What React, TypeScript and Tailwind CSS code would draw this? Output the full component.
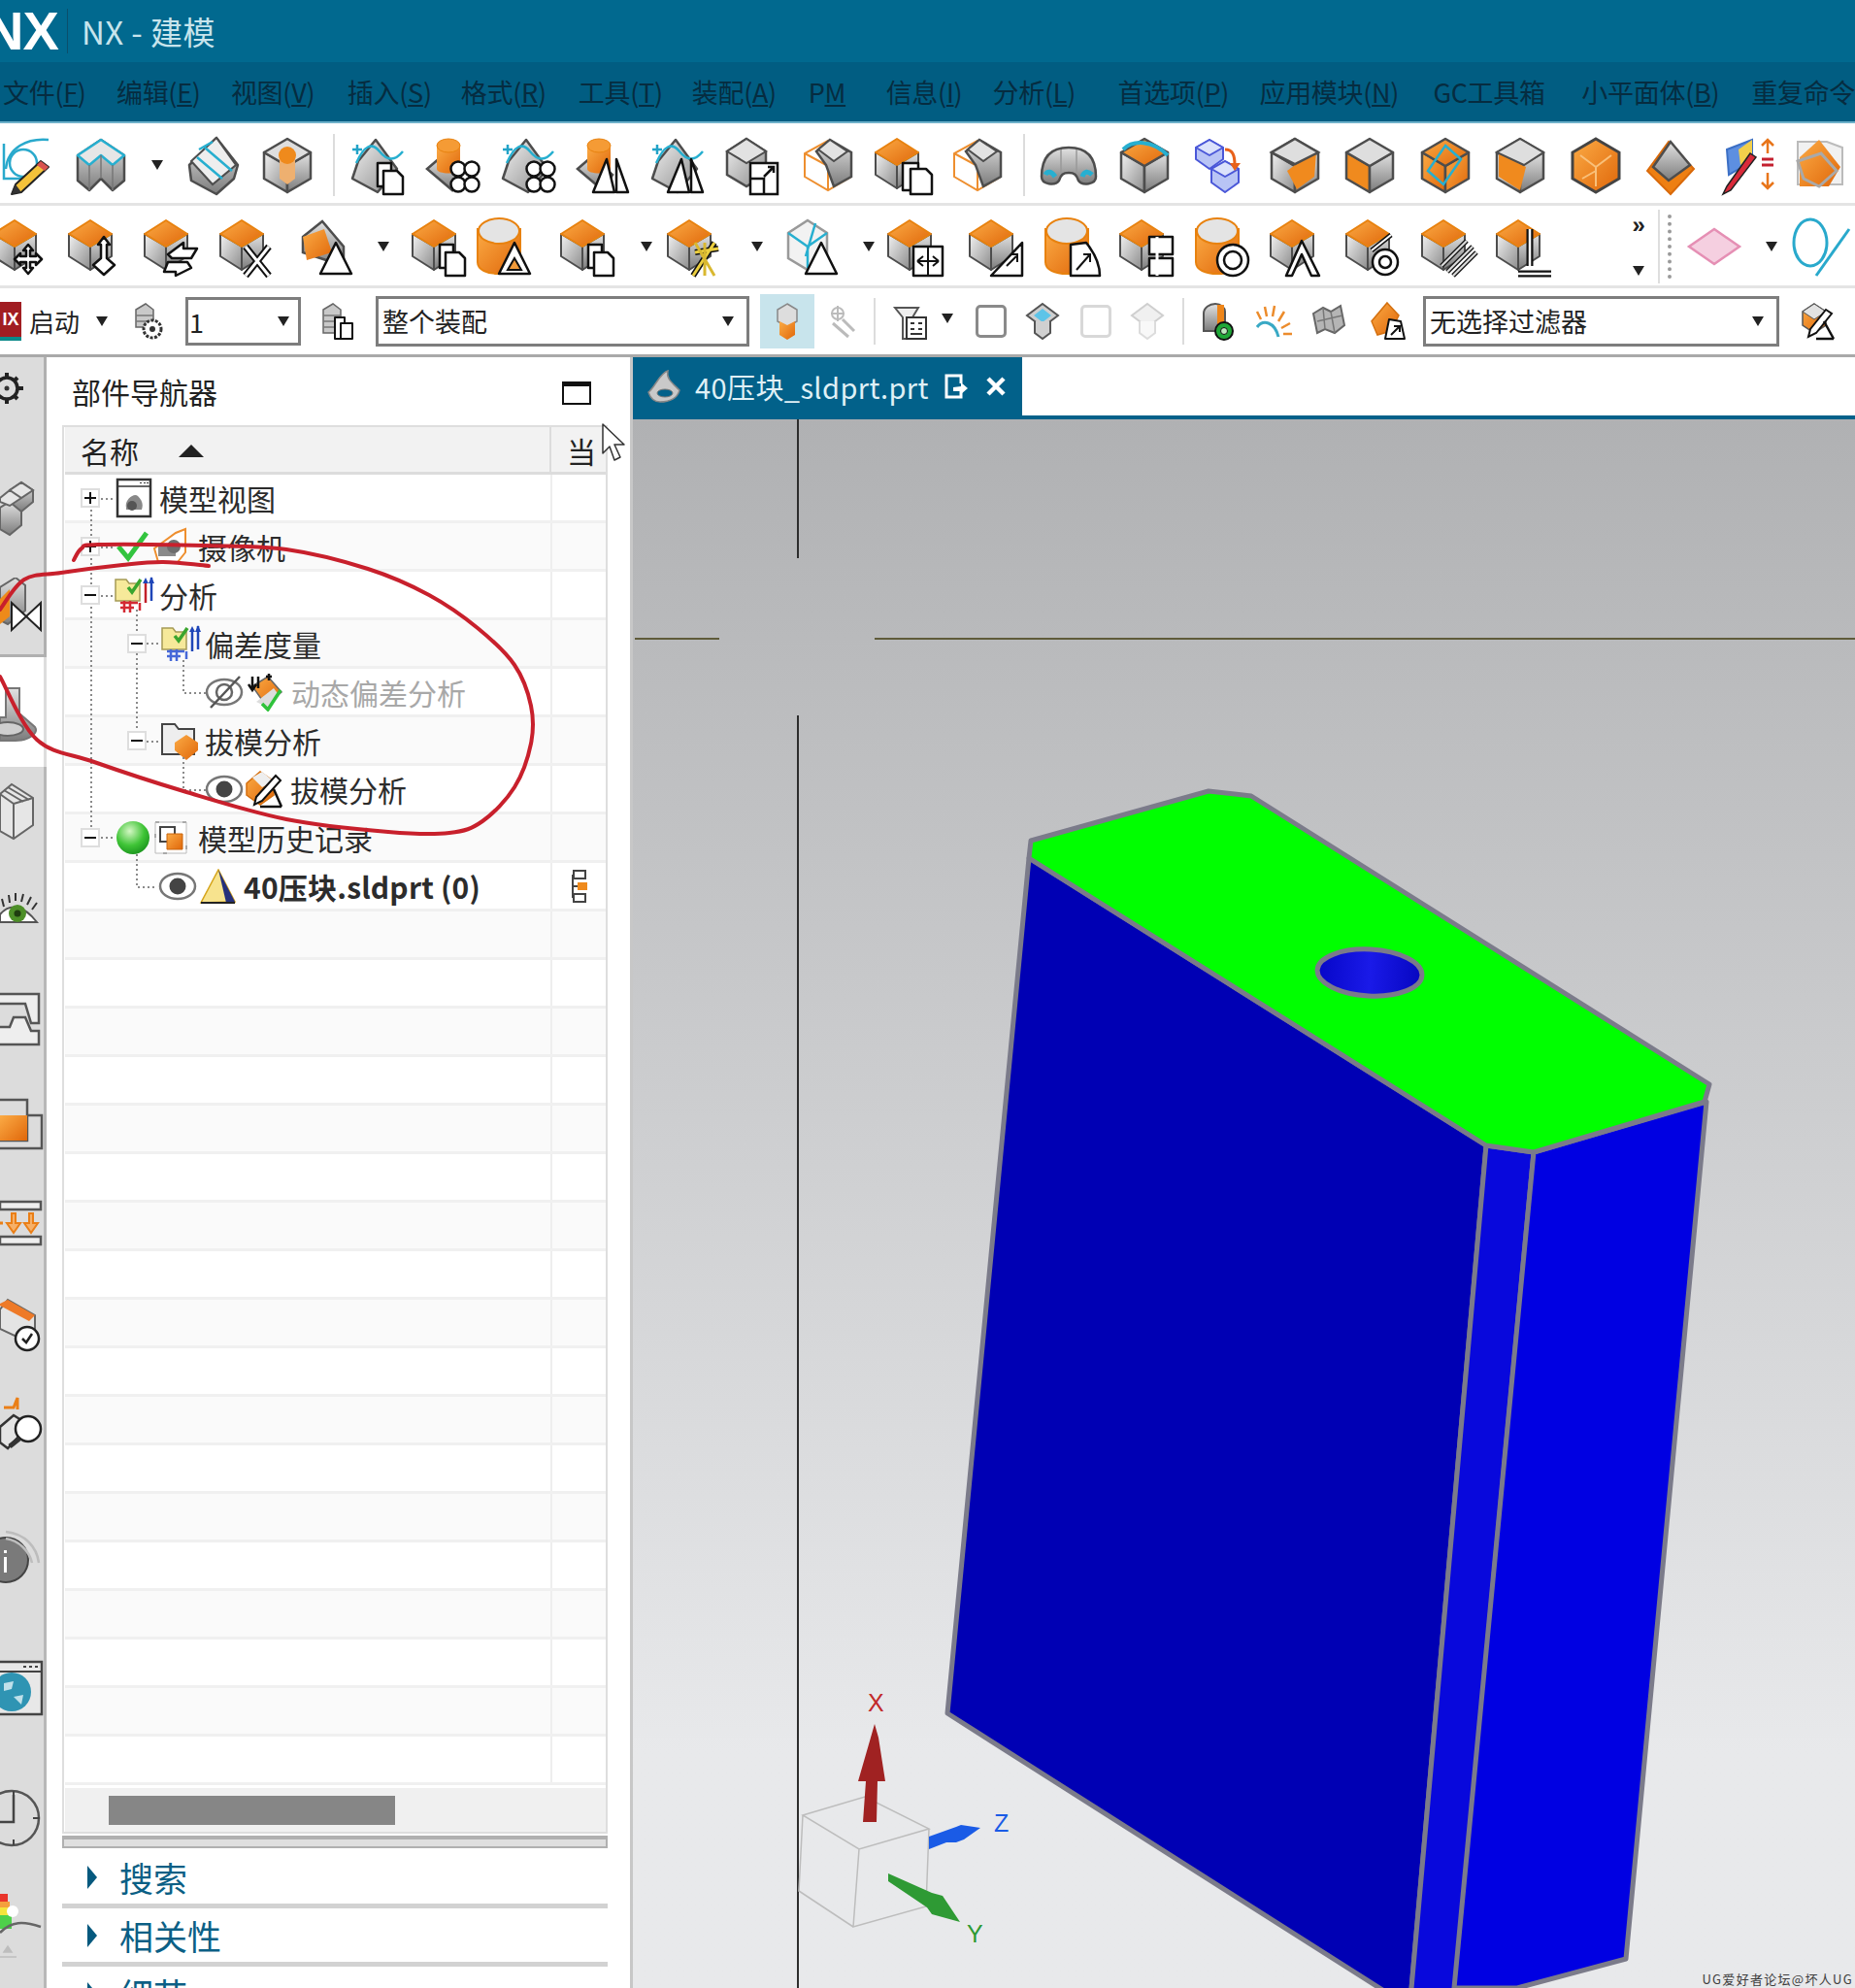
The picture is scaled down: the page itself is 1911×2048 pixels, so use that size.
import React from 'react';

type P = { children?: React.ReactNode; className?: string };

const S = '#4d4d4d';
const I = ({ children, className = '' }: P) => (
  <svg viewBox="0 0 60 60" className={`h-[60px] w-[60px] shrink-0 overflow-visible ${className}`}>{children}</svg>
);
const Sm = ({ children, className = '' }: P) => (
  <svg viewBox="0 0 40 40" className={`h-[40px] w-[40px] shrink-0 overflow-visible ${className}`}>{children}</svg>
);
const Dd = ({ className = '' }: P) => (
  <svg viewBox="0 0 14 14" className={`h-[14px] w-[14px] shrink-0 ${className}`}><path d="M1 2h12l-6 10z" fill="#222" /></svg>
);
const Defs = () => (
  <svg className="absolute h-0 w-0">
    <defs>
      <linearGradient id="gL" x1="0" y1="0" x2="1" y2="1"><stop offset="0" stopColor="#f2f2f2" /><stop offset="1" stopColor="#8c8c8c" /></linearGradient>
      <linearGradient id="gR" x1="0" y1="0" x2="0" y2="1"><stop offset="0" stopColor="#e2e2e2" /><stop offset="1" stopColor="#7c7c7c" /></linearGradient>
      <linearGradient id="gO" x1="0" y1="0" x2="1" y2="1"><stop offset="0" stopColor="#fbab45" /><stop offset="1" stopColor="#e0670a" /></linearGradient>
      <linearGradient id="gH" x1="0" y1="0" x2="1" y2="0"><stop offset="0" stopColor="#0606c8" /><stop offset="0.5" stopColor="#1a1ae8" /><stop offset="1" stopColor="#0606c0" /></linearGradient>
      <radialGradient id="gS" cx="0.4" cy="0.3" r="0.8"><stop offset="0" stopColor="#d4f7c4" /><stop offset="0.55" stopColor="#3fc436" /><stop offset="1" stopColor="#128a18" /></radialGradient>
    </defs>
  </svg>
);

// Isometric block at the left of the box with a mark over its lower right.
const OC = ({ top = 'url(#gO)' }: { top?: string }) => (
  <g stroke={S} strokeWidth="2" strokeLinejoin="round">
    <path d="M2 17 24 30V54L2 40Z" fill="url(#gL)" />
    <path d="M46 17 24 30V54L46 40Z" fill="url(#gR)" />
    <path d="M24 3 46 17 24 30 2 17Z" fill={top} stroke={top === 'url(#gO)' ? '#e8820f' : S} />
  </g>
);
// Full-size hexagonal block.
const Hex = ({ top = '#dedede', l = 'url(#gL)', r = 'url(#gR)' }: { top?: string; l?: string; r?: string }) => (
  <g stroke={S} strokeWidth="2.5" strokeLinejoin="round">
    <path d="M6 17 30 31V58L6 44Z" fill={l} />
    <path d="M54 17 30 31V58L54 44Z" fill={r} />
    <path d="M30 3 54 17 30 31 6 17Z" fill={top} />
  </g>
);
const Cyl = () => (
  <g>
    <path d="M2 12V46C2 54 12 58 24 58S46 54 46 46V12Z" fill="url(#gO)" stroke="#e8820f" strokeWidth="2" />
    <ellipse cx="24" cy="14" rx="21" ry="13" fill="#e4e4e4" stroke="#e8820f" strokeWidth="2" />
  </g>
);
const ln = { fill: '#fff', stroke: '#111', strokeWidth: 2.5, strokeLinejoin: 'round' as const };
const Tri = () => <path d="M40 26 56 58H24Z" {...ln} />;
const Pages = () => (
  <g {...ln}><path d="M30 28H44V52H30Z" /><path d="M36 36H50L56 42V60H36Z" /></g>
);
const TwoTri = () => (
  <g {...ln}><path d="M34 24 42 58H20Z" /><path d="M44 24 56 58H44Z" /></g>
);
const Four = ({ dx = 0 }: { dx?: number }) => (
  <g {...ln} transform={`translate(${dx} 0)`}>
    <circle cx="36" cy="34" r="7.5" /><circle cx="50" cy="34" r="7.5" /><circle cx="36" cy="50" r="7.5" /><circle cx="50" cy="50" r="7.5" />
  </g>
);
const Surf = () => (
  <g>
    <path d="M10 26 28 4 50 34 30 58 4 44Z" fill="url(#gL)" stroke={S} strokeWidth="2.5" strokeLinejoin="round" />
    <path d="M4 14H14M9 9V19" stroke="#22a3c8" strokeWidth="2.5" />
    <path d="M8 28C16 10 24 6 32 16S48 26 56 16" fill="none" stroke="#27afd0" strokeWidth="2.5" />
  </g>
);
const CylPlate = () => (
  <g>
    <path d="M4 34 18 22 40 40 30 56Z" fill="url(#gR)" stroke={S} strokeWidth="2.5" />
    <path d="M14 10V34C14 40 38 40 38 34V10Z" fill="url(#gO)" />
    <ellipse cx="26" cy="10" rx="12" ry="7" fill="#f59b35" stroke="#e8820f" />
  </g>
);
const Wire = () => (
  <g>
    <path d="M30 5 54 18V42L30 56 6 42V18Z" fill="#fff" stroke="#ee8f2f" strokeWidth="2" />
    <path d="M6 18 30 31 54 18M30 31V56" fill="none" stroke="#ee8f2f" strokeWidth="2" />
    <path d="M32 4 54 17V42L36 52 28 30 18 16Z" fill="url(#gR)" stroke={S} strokeWidth="2.5" />
    <path d="M32 4 50 16 36 26 20 14Z" fill="#e2e2e2" stroke={S} strokeWidth="2" />
  </g>
);

const Row1A = [
  <I key="a">
    <path d="M6 8V44H26" fill="none" stroke="#29a9cc" strokeWidth="2.5" />
    <path d="M8 34C10 12 30 2 52 4" fill="none" stroke="#29a9cc" strokeWidth="2.5" />
    <circle cx="26" cy="28" r="14" fill="none" stroke="#29a9cc" strokeWidth="2.5" />
    <path d="M44 26 52 32 24 58 14 60 18 50Z" fill="#f4c23a" stroke="#222" strokeWidth="2" strokeLinejoin="round" />
    <path d="M44 26 52 32 48 36 40 30Z" fill="#d9534f" />
    <path d="M18 50 24 58 14 60Z" fill="#333" />
  </I>,
  <I key="b">
    <path d="M6 20 30 4 54 20V46L42 56 30 44 18 56 6 46Z" fill="url(#gR)" stroke={S} strokeWidth="2.5" strokeLinejoin="round" />
    <path d="M30 20 18 30 6 20 30 4 54 20 42 30Z" fill="#e6e6e6" stroke="#27afd0" strokeWidth="2.5" strokeLinejoin="round" />
    <path d="M18 30V56M42 30V56M30 20V44" stroke="#777" strokeWidth="1.5" />
  </I>,
];
const Row1B = [
  <I key="c">
    <path d="M6 30 34 2 56 30 52 44 34 60 8 46Z" fill="url(#gR)" stroke={S} strokeWidth="2.5" strokeLinejoin="round" />
    <path d="M8 26 34 2 54 30 30 50Z" fill="#eee" stroke={S} strokeWidth="2" />
    <path d="M14 22 40 44M22 12 50 36M30 6 16 14" fill="none" stroke="#27afd0" strokeWidth="2.5" />
  </I>,
  <I key="d">
    <Hex />
    <path d="M22 20V44L30 50 38 44V20Z" fill="#eeb070" />
    <circle cx="30" cy="20" r="9" fill="#ef8a1c" />
  </I>,
];
const Row1C = [
  <I key="1"><Surf /><Pages /></I>,
  <I key="2"><CylPlate /><Four /></I>,
  <I key="3"><Surf /><Four /></I>,
  <I key="4"><CylPlate /><TwoTri /></I>,
  <I key="5"><Surf /><TwoTri /></I>,
  <I key="6">
    <path d="M24 3 44 16V40L24 52 4 40V16Z" fill="url(#gL)" stroke={S} strokeWidth="2.5" />
    <path d="M24 3 44 16 24 28 4 16Z" fill="#e2e2e2" stroke={S} strokeWidth="2" />
    <path d="M28 28H56V60H28Z" fill="#fff" stroke="#111" strokeWidth="2.5" />
    <path d="M28 44H42V60M42 42 52 32M46 32H52V38" fill="none" stroke="#111" strokeWidth="2.5" />
  </I>,
  <I key="7"><Wire /></I>,
  <I key="8"><OC /><path d="M30 28H46V56H30Z" {...ln} /><path d="M38 34H54L60 40V60H38Z" {...ln} /></I>,
  <I key="9"><Wire /></I>,
];
const Row1D = [
  <I key="e">
    <path d="M2 42C2 18 16 12 30 12S58 18 58 42C58 50 44 52 40 46 38 40 36 38 30 38S22 40 20 46C16 52 2 50 2 42Z" fill="url(#gR)" stroke={S} strokeWidth="2.5" />
    <path d="M6 40C8 36 12 36 16 42M44 42C46 36 50 36 54 40" fill="none" stroke="#27afd0" strokeWidth="5" />
    <path d="M22 14V38M38 14V38" stroke="#999" strokeWidth="1.5" />
  </I>,
  <I key="f"><Hex top="url(#gO)" /><path d="M8 14C18 4 38 4 54 20" fill="none" stroke="#27afd0" strokeWidth="4" /></I>,
  <I key="g">
    <g stroke="#4a57d8" strokeWidth="2" strokeLinejoin="round">
      <path d="M6 12 20 4 34 12V24L20 34 6 24Z" fill="#b8c4f5" /><path d="M6 12 20 20 34 12 20 4Z" fill="#dbe2fb" />
      <path d="M22 34 36 26 50 34V48L36 58 22 48Z" fill="#b8c4f5" /><path d="M22 34 36 42 50 34 36 26Z" fill="#dbe2fb" />
    </g>
    <path d="M36 14C44 14 46 20 46 30" fill="none" stroke="#e8611a" strokeWidth="3" /><path d="M41 28H52L46 36Z" fill="#e8611a" />
  </I>,
  <I key="h"><Hex /><path d="M30 30 52 18 50 42 32 55 22 36Z" fill="#f08a1e" /><path d="M30 3 54 17 30 29 6 17Z" fill="#dedede" stroke={S} strokeWidth="2.5" /></I>,
  <I key="i"><Hex l="#f08a1e" /></I>,
  <I key="j"><Hex top="url(#gO)" l="url(#gO)" r="url(#gO)" /><path d="M30 10 46 24 28 50 12 36Z" fill="none" stroke="#27afd0" strokeWidth="2.5" /></I>,
  <I key="k"><Hex /><path d="M8 18 36 32 30 56 8 42Z" fill="#f08a1e" /><path d="M30 3 54 17 34 30 6 17Z" fill="#dedede" stroke={S} strokeWidth="2" /></I>,
  <I key="l"><path d="M30 3 54 17V44L30 58 6 44V17Z" fill="url(#gO)" stroke="#444" strokeWidth="3" /><path d="M14 20 30 32 46 20M30 32V52M16 44 30 36" fill="none" stroke="#f9c07a" strokeWidth="2" /></I>,
  <I key="m">
    <path d="M6 36 28 6 54 34 30 60Z" fill="#ee7f12" stroke="#d9690a" strokeWidth="2" />
    <path d="M12 32 30 6 50 30 28 46Z" fill="url(#gR)" stroke={S} strokeWidth="2.5" />
  </I>,
  <I key="n">
    <path d="M10 14 36 4 36 26 12 40Z" fill="#5d8fe0" stroke="#3b6fc5" strokeWidth="2" />
    <path d="M22 14 36 4 36 22 24 30Z" fill="#f2cf4b" />
    <path d="M34 18 10 52 6 60 14 56 40 22Z" fill="#d92a3a" stroke="#222" strokeWidth="1.5" />
    <path d="M52 4V18M52 38V54M46 10 52 4 58 10M46 48 52 54 58 48" fill="none" stroke="#e8751a" strokeWidth="2.5" />
    <path d="M46 24H58M46 30H58" stroke="#c3202f" strokeWidth="3" />
  </I>,
  <I key="o">
    <path d="M6 6H36L52 12V50H6Z" fill="#f1f1f1" stroke="#bbb" strokeWidth="2" />
    <path d="M28 4 50 32 38 52H8V22Z" fill="url(#gO)" />
    <path d="M6 26 30 18 46 36 28 52 12 44Z" fill="none" stroke="#a9a9a9" strokeWidth="3" />
  </I>,
];

const R2 = {
  move: <I className="-ml-[9px]"><OC /><path d="M38 28l5 6h-3v6h6v-3l6 6-6 6v-3h-6v6h3l-5 6-5-6h3v-6h-6v3l-6-6 6-6v3h6v-6h-3z" {...ln} /></I>,
  up: <I><OC /><path d="M38 20l6 8h-3v14l8 7-11 10-11-10 8-7V28h-3z" {...ln} /></I>,
  swap: <I><OC /><g {...ln}><path d="M26 38 42 26V32H56L50 42H30Z" /><path d="M50 52 34 60V56H22L26 46H46Z" /></g></I>,
  x: <I><OC /><path d="M28 30 52 60M52 30 28 60" stroke="#111" strokeWidth="7" /><path d="M28 30 52 60M52 30 28 60" stroke="#fff" strokeWidth="3" /></I>,
  tri: (
    <I>
      <path d="M6 20 26 4 48 30V50L6 36Z" fill="url(#gR)" stroke={S} strokeWidth="2.5" />
      <path d="M6 20 28 12 36 36 10 44Z" fill="url(#gO)" />
      <Tri />
    </I>
  ),
};

const Bullet = ({ className = '' }: P) => <div className={`h-[45px] w-[2px] shrink-0 bg-[#dcdcdc] ${className}`} />;

const Combo = ({ className, text }: { className: string; text: string }) => (
  <div className={`flex h-[52px] shrink-0 items-center justify-between border-[3px] border-[#7d7d7d] bg-white pl-[4px] pr-[12px] text-[27px] text-[#222] ${className}`}>
    <span>{text}</span>
    <Dd />
  </div>
);

const menu: [string, string, string][] = [
  ['文件', 'F', 'w-[117px]'],
  ['编辑', 'E', 'w-[118px]'],
  ['视图', 'V', 'w-[120px]'],
  ['插入', 'S', 'w-[117px]'],
  ['格式', 'R', 'w-[121px]'],
  ['工具', 'T', 'w-[117px]'],
  ['装配', 'A', 'w-[120px]'],
];
const menu2: [string, string, string][] = [
  ['信息', 'I', 'w-[110px]'],
  ['分析', 'L', 'w-[129px]'],
  ['首选项', 'P', 'w-[146px]'],
  ['应用模块', 'N', 'w-[179px]'],
];

const Box = ({ minus, className = '' }: { minus?: boolean; className?: string }) => (
  <div className={`relative z-20 flex h-[20px] w-[20px] shrink-0 items-center justify-center border-2 border-[#dedede] bg-white ${className}`}>
    <div className="h-[2px] w-[12px] bg-[#111]" />
    {!minus && <div className="absolute h-[12px] w-[2px] bg-[#111]" />}
  </div>
);
const Row = ({ alt, children, last }: { alt?: boolean; children?: React.ReactNode; last?: React.ReactNode }) => (
  <div className={`flex h-[50px] border-b-[3px] border-[#f0f0f0] ${alt ? 'bg-[#fafafa]' : 'bg-white'}`}>
    <div className="flex w-[500px] shrink-0 items-center text-[30px] leading-none text-[#2c2c2c]">{children}</div>
    <div className="flex flex-1 items-center justify-center border-l-2 border-[#eeeeee]">{last}</div>
  </div>
);
const Eye = ({ off, className = '' }: { off?: boolean; className?: string }) => (
  <Sm className={className}>
    <ellipse cx="20" cy="20" rx="18" ry="13" fill="#fff" stroke="#777" strokeWidth="2.5" />
    {off ? <circle cx="20" cy="20" r="8" fill="none" stroke="#666" strokeWidth="2.5" /> : <circle cx="20" cy="20" r="8.5" fill="#444" />}
    {off && <path d="M6 36 36 4" stroke="#555" strokeWidth="2.5" />}
  </Sm>
);
const Folder = ({ blue, className = '' }: { blue?: boolean; className?: string }) => (
  <Sm className={className}>
    <path d="M1 4H12L15 8H26V26H1Z" fill="#f6e99a" stroke="#a59a55" strokeWidth="1.5" />
    <path d="M14 12 18 17 27 4" fill="none" stroke="#3aa52e" strokeWidth="3.5" />
    <path d="M32 6V28" stroke={blue ? '#1f46b8' : '#c2202a'} strokeWidth="2.5" /><path d="M38 2V26" stroke="#1f46b8" strokeWidth="2.5" />
    <path d="M29 8 32 2 35 8ZM35 8 38 1 41 8Z" fill="#1f46b8" />
    <path d="M6 28H24M6 33H20M10 26V38M16 26V38" stroke={blue ? '#4668d8' : '#d42a33'} strokeWidth="2.5" />
    <path d="M26 28V36" stroke={blue ? '#4668d8' : '#d42a33'} strokeWidth="2.5" />
  </Sm>
);

// Cursive marker stroke through a list of points.
const smooth = (p: number[][]) => {
  let d = `M${p[0][0]} ${p[0][1]}`;
  for (let i = 0; i < p.length - 1; i++) {
    const a = p[i - 1] || p[i], b = p[i], c = p[i + 1], e = p[i + 2] || c;
    d += `C${b[0] + (c[0] - a[0]) / 6} ${b[1] + (c[1] - a[1]) / 6} ${c[0] - (e[0] - b[0]) / 6} ${c[1] - (e[1] - b[1]) / 6} ${c[0]} ${c[1]}`;
  }
  return d;
};
const loop = [[76, 577], [84, 565], [101, 561], [210, 562], [295, 566], [379, 586], [442, 613], [492, 647], [530, 685], [547, 727], [547, 766], [530, 811], [497, 846], [463, 858], [400, 857], [295, 844], [189, 815], [97, 785], [38, 762], [0, 697]];
const loop2 = [[215, 583], [168, 579], [126, 582], [63, 590], [25, 597], [0, 628]];

const Strip = ({ children, className = '' }: P) => <div className={`flex flex-col border-r-[3px] ${className}`}>{children}</div>;
const V = ({ children, className = '' }: P) => (
  <svg viewBox="0 0 45 60" className={`h-[60px] w-[45px] shrink-0 ${className}`}>{children}</svg>
);

export default function App() {
  return (
    <div className="relative h-[2048px] w-[1911px] overflow-hidden bg-white font-['Noto_Sans_CJK_SC',sans-serif]">
      <Defs />
      {/* title */}
      <div className="flex h-[64px] items-center bg-[#01698f]">
        <span className="-ml-[16px] w-[85px] shrink-0 font-['Liberation_Sans',sans-serif] text-[56px] font-bold leading-none tracking-[-1px] text-white">NX</span>
        <div className="h-[46px] w-[1px] bg-[#0a4f6c]" />
        <span className="ml-[14px] text-[33px] leading-none tracking-[0.4px] text-[#c7e4ec]">NX - 建模</span>
      </div>
      {/* menu */}
      <div className="flex h-[63px] items-center whitespace-nowrap border-b-2 border-[#6fb1ca] bg-[#015d82] pl-[3px] text-[27px] leading-none tracking-[-0.3px] text-[#062c40]">
        {menu.map(([a, b, w]) => (
          <span key={a} className={w}>{a}(<u>{b}</u>)</span>
        ))}
        <span className="w-[80px]">P<u>M</u></span>
        {menu2.map(([a, b, w]) => (
          <span key={a} className={w}>{a}(<u>{b}</u>)</span>
        ))}
        <span className="w-[153px]">GC工具箱</span>
        <span className="w-[175px]">小平面体(<u>B</u>)</span>
        <span>重复命令</span>
      </div>
      {/* row 1 */}
      <div className="flex h-[85px] items-center overflow-hidden border-b-[3px] border-[#e4e4e4] pt-[4px]">
        <div className="-ml-[2px] flex gap-[16px]">{Row1A}</div>
        <Dd className="ml-[21px]" />
        <div className="ml-[20px] flex gap-[17px]">{Row1B}</div>
        <Bullet className="ml-[17px] h-[64px]" />
        <div className="ml-[14px] flex gap-[17.25px]">{Row1C}</div>
        <Bullet className="ml-[17px] h-[64px]" />
        <div className="ml-[15px] flex gap-[17.5px]">{Row1D}</div>
      </div>
      {/* row 2 */}
      <div className="flex h-[85px] items-center overflow-hidden border-b-[3px] border-[#e4e4e4] pt-[2px]">
        <div className="flex gap-[18px]">{R2.move}{R2.up}{R2.swap}{R2.x}</div>
        <div className="ml-[21px]">{R2.tri}</div>
        <Dd className="ml-[22px]" />
        <I className="ml-[21px]"><OC /><Pages /></I>
        <I className="ml-[7px]"><Cyl /><Tri /><path d="M40 42 47 54H33Z" fill="#f29a39" stroke="#111" strokeWidth="2" /></I>
        <I className="ml-[26px]"><OC /><Pages /></I>
        <Dd className="ml-[23px]" />
        <I className="ml-[13px]"><OC /><path d="M30 36 54 32M28 60 50 26" stroke="#111" strokeWidth="6" /><path d="M30 36 54 32M28 60 50 26" stroke="#eccf3f" strokeWidth="3" /><path d="M30 26 50 60M40 26V60" stroke="#d9b830" strokeWidth="3" /></I>
        <Dd className="ml-[27px]" />
        <I className="ml-[19px]">
          <path d="M26 3 46 16V42L26 54 6 42V16Z" fill="#f2f2f2" stroke="#999" strokeWidth="2.5" />
          <path d="M26 30V52M6 16 26 30 46 16M34 6 24 40" fill="none" stroke="#27afd0" strokeWidth="2.5" />
          <Tri />
        </I>
        <Dd className="ml-[22px]" />
        <I className="ml-[11px]"><OC /><path d="M28 30H58V60H28Z" {...ln} /><path d="M32 45H54M32 45l6-5M32 45l6 5M54 45l-6-5M54 45l-6 5M43 30V60" fill="none" stroke="#111" strokeWidth="2" /></I>
        <div className="ml-[24px] flex gap-[17.6px]">
          <I><OC /><path d="M56 26V60H24Z" {...ln} /><path d="M40 50 50 40M44 38H51V46" fill="none" stroke="#111" strokeWidth="2" /></I>
          <I><Cyl /><path d="M28 28 44 26C52 36 58 48 58 60H28Z" {...ln} /><path d="M34 54 48 38M41 38H48V46" fill="none" stroke="#111" strokeWidth="2" /></I>
          <I><OC /><g {...ln}><path d="M32 20H56V38H32Z" /><path d="M32 42H56V60H32Z" /></g><path d="M40 20V60" stroke="#fff" strokeWidth="3" /></I>
          <I><Cyl /><circle cx="40" cy="44" r="16" {...ln} /><circle cx="40" cy="44" r="9" {...ln} /></I>
          <I><OC /><g {...ln}><path d="M34 24 18 60H24L34 38 44 60H52Z" /></g></I>
          <I><OC /><circle cx="42" cy="46" r="13" {...ln} /><circle cx="42" cy="46" r="6" {...ln} /><path d="M28 34 48 18" stroke="#111" strokeWidth="5" /><path d="M28 34 48 18" stroke="#fff" strokeWidth="2" /></I>
          <I><OC /><path d="M22 50 48 24M28 56 54 30M34 60 58 36" stroke="#222" strokeWidth="5" /><path d="M22 50 48 24M28 56 54 30M34 60 58 36" stroke="#ddd" strokeWidth="2" /></I>
          <I><OC /><path d="M36 12V50M24 58H58" stroke="#111" strokeWidth="7" /><path d="M36 12V50M24 58H58" stroke="#fff" strokeWidth="2.5" /></I>
        </div>
        <div className="ml-[78px] flex h-[64px] w-[20px] shrink-0 flex-col items-center justify-between">
          <span className="font-['Liberation_Sans',sans-serif] text-[24px] font-bold leading-[20px] text-[#222]">»</span>
          <Dd />
        </div>
        <div className="ml-[10px] h-[76px] w-[2px] shrink-0 bg-[#dedede]" />
        <div className="ml-[8px] h-[66px] w-[4px] shrink-0 border-l-4 border-dotted border-[#9a9a9a]" />
        <I className="ml-[14px]"><path d="M30 12 56 30 30 48 4 30Z" fill="#f5cfe0" stroke="#e58fb4" strokeWidth="2.5" /></I>
        <Dd className="ml-[22px]" />
        <I className="ml-[13px]"><ellipse cx="20" cy="26" rx="17" ry="24" fill="none" stroke="#29a9cc" strokeWidth="3" /><path d="M26 60 60 12" stroke="#29a9cc" strokeWidth="3" /></I>
      </div>
      {/* row 3 */}
      <div className="flex h-[71px] items-center overflow-hidden border-b-[3px] border-[#a9a9a9]">
        <div className="flex h-[40px] w-[22px] shrink-0 items-center justify-center overflow-hidden border-b-4 border-[#0a8a8a] bg-[#a11d22] font-['Liberation_Sans',sans-serif] text-[18px] font-bold text-white">IX</div>
        <span className="ml-[8px] w-[60px] shrink-0 text-[26px] leading-none text-[#222]">启动</span>
        <Dd className="ml-[8px]" />
        <Sm className="ml-[18px]">
          <path d="M10 8 20 2 28 8V26H10Z" fill="#c9c9c9" stroke="#666" strokeWidth="1.5" /><path d="M10 14H28M10 20H28" stroke="#777" strokeWidth="1.5" />
          <circle cx="27" cy="28" r="9" fill="#fff" stroke="#333" strokeWidth="3" strokeDasharray="3 1.5" /><circle cx="27" cy="28" r="3" fill="#333" />
        </Sm>
        <div className="ml-[21px] flex h-[50px] w-[119px] shrink-0 items-center justify-between border-[3px] border-[#7d7d7d] pl-[1px] pr-[8px] text-[27px] leading-none text-[#222]"><span>1</span><Dd /></div>
        <Sm className="ml-[17px]">
          <path d="M6 8 16 2 24 8V32H6Z" fill="#c9c9c9" stroke="#666" strokeWidth="1.5" /><path d="M6 14H24M6 20H24M6 26H24" stroke="#777" strokeWidth="1.5" />
          <path d="M18 16H28V38H18Z" {...ln} strokeWidth={2} /><path d="M24 22H36V38H24Z" {...ln} strokeWidth={2} />
        </Sm>
        <Combo className="ml-[20px] w-[385px]" text="整个装配" />
        <div className="ml-[11px] flex h-[56px] w-[56px] shrink-0 items-center justify-center bg-[#c8e4ec]">
          <Sm>
            <path d="M20 2 30 8V20L20 26 10 20V8Z" fill="#ddd" stroke="#888" strokeWidth="1.5" />
            <path d="M12 20 20 24 28 20V34L20 39 12 34Z" fill="url(#gO)" />
          </Sm>
        </div>
        <Sm className="ml-[7px]">
          <path d="M10 12H24M17 4V20" stroke="#bbb" strokeWidth="2" /><circle cx="17" cy="12" r="6" fill="none" stroke="#bbb" strokeWidth="2" />
          <path d="M12 22 28 36M22 18 34 30" stroke="#bbb" strokeWidth="3" />
        </Sm>
        <div className="ml-[14px] h-[48px] w-[2px] shrink-0 bg-[#dcdcdc]" />
        <Sm className="ml-[16px]">
          <path d="M4 6H28L22 16V38H12V16Z" fill="#eee" stroke="#555" strokeWidth="2" />
          <path d="M16 16H36V38H16Z" fill="#fff" stroke="#333" strokeWidth="2" /><path d="M20 22H24M28 22H32M20 28H24M28 28H32M20 33H32" stroke="#333" strokeWidth="2" />
        </Sm>
        <Dd className="ml-[11px] -mt-[6px]" />
        <div className="ml-[22px] h-[34px] w-[32px] shrink-0 rounded-[5px] border-[3px] border-[#8a8a8a]" />
        <Sm className="ml-[17px]">
          <path d="M20 2 36 14 20 26 4 14Z" fill="#cfcfcf" stroke="#555" strokeWidth="2" /><path d="M20 7 29 14 20 21 11 14Z" fill="#5ec4e8" />
          <path d="M12 20V32L20 38 28 32V20" fill="#d0d0d0" stroke="#555" strokeWidth="2" />
        </Sm>
        <div className="ml-[19px] h-[34px] w-[32px] shrink-0 rounded-[5px] border-[3px] border-[#d8d8d8]" />
        <Sm className="ml-[17px] opacity-40">
          <path d="M20 2 36 14 20 26 4 14Z" fill="#dcdcdc" stroke="#888" strokeWidth="2" /><path d="M12 20V32L20 38 28 32V20" fill="#eee" stroke="#aaa" strokeWidth="2" />
        </Sm>
        <div className="ml-[16px] h-[48px] w-[2px] shrink-0 bg-[#dcdcdc]" />
        <Sm className="ml-[14px]">
          <path d="M6 28V12C6 6 12 2 18 2S28 6 28 10V30H6Z" fill="url(#gR)" stroke="#555" strokeWidth="2" />
          <path d="M20 3H27V26H20Z" fill="#ee8519" />
          <circle cx="27" cy="30" r="9" fill="#1fa838" stroke="#111" strokeWidth="2" /><circle cx="27" cy="30" r="3.5" fill="#bde8c0" stroke="#111" />
        </Sm>
        <Sm className="ml-[17px]">
          <path d="M4 26C10 18 22 20 26 36" fill="none" stroke="#39a9c5" strokeWidth="3" />
          <path d="M8 18 4 10M14 15 12 5M20 15 22 4M26 20 32 10M29 27 38 22M31 33 40 33" stroke="#ec8c2c" strokeWidth="2.5" />
        </Sm>
        <Sm className="ml-[18px]">
          <path d="M4 12 14 6 22 10 32 4 36 24 26 32 16 28 8 32Z" fill="#b5b5b5" stroke="#666" strokeWidth="2" /><path d="M14 6 16 28M22 10 26 32M8 20 34 14" stroke="#777" strokeWidth="1.5" />
        </Sm>
        <Sm className="ml-[20px]">
          <path d="M20 1 32 14 24 30 10 34 4 20Z" fill="url(#gO)" stroke="#d4700f" strokeWidth="1.5" />
          <path d="M22 18 34 20 38 38H18Z" {...ln} strokeWidth={2} /><path d="M24 34 32 26M27 25H33V31" fill="none" stroke="#111" strokeWidth="2" />
        </Sm>
        <Combo className="ml-[17px] w-[367px]" text="无选择过滤器" />
        <Sm className="ml-[18px]">
          <path d="M18 2 30 10 30 24 18 32 6 24V10Z" fill="url(#gO)" stroke="#555" strokeWidth="1.5" /><path d="M18 2 30 10 18 18 6 10Z" fill="#e2e2e2" stroke="#555" />
          <path d="M14 28 30 8 36 12 20 32 12 36Z" fill="#fff" stroke="#111" strokeWidth="2" /><path d="M20 38H38M28 20 38 38" stroke="#111" strokeWidth="2.5" />
        </Sm>
      </div>

      {/* main */}
      <div className="flex h-[1680px]">
        <div className="flex w-[48px] shrink-0 flex-col overflow-hidden">
          <Strip className="h-[309px] border-[#b0b0b0] border-b-[3px] bg-[#dcdcdc]">
            <V className="mt-[2px]">
              <circle cx="7" cy="30" r="11" fill="none" stroke="#222" strokeWidth="3.5" /><circle cx="7" cy="30" r="2.5" fill="#333" />
              <path d="M7 14V19M7 41V46M18 30H24M18 19 15 22M18 41 15 38" stroke="#222" strokeWidth="4" />
            </V>
            <V className="mt-[63px]">
              <path d="M0 30 10 24 22 30V48L10 58 0 52Z" fill="url(#gR)" stroke="#666" strokeWidth="2" /><path d="M10 12 22 4 34 12V24L22 34 10 24Z" fill="url(#gR)" stroke="#666" strokeWidth="2" /><path d="M10 12 22 20 34 12 22 4ZM0 20 10 12 22 20 10 28 0 24Z" fill="#e6e6e6" stroke="#666" strokeWidth="2" />
            </V>
            <V className="mt-[42px]">
              <path d="M0 10 16 0 26 8V34L8 48 0 44Z" fill="url(#gR)" stroke="#666" strokeWidth="2" />
              <path d="M0 22 10 12V40L0 48Z" fill="#ee8a1a" />
              <path d="M12 26 42 54V26L12 54Z" fill="#fff" stroke="#222" strokeWidth="2" />
            </V>
          </Strip>
          <div className="h-[113px] shrink-0 border-r-[3px] border-[#dddddd] bg-white pt-[28px]">
            <V>
              <path d="M6 4H20V30L36 44C40 50 30 58 16 58H0V34H6Z" fill="url(#gR)" stroke="#777" strokeWidth="2" />
              <ellipse cx="8" cy="46" rx="16" ry="7" fill="#cfcfcf" stroke="#666" strokeWidth="2" />
            </V>
          </div>
          <Strip className="flex-1 border-[#b8b8b8] bg-[#dcdcdc]">
            <V className="mt-[16px]">
              <path d="M0 12 12 2 34 16V44L14 58 0 50Z" fill="#e6e6e6" stroke="#666" strokeWidth="2" /><path d="M14 22 34 16M14 22V58M0 12 14 22M4 8 24 20M8 5 30 18" fill="none" stroke="#666" strokeWidth="2" />
            </V>
            <V className="mt-[46px]">
              <path d="M0 30C10 18 24 20 38 38H0Z" fill="#fff" stroke="#555" strokeWidth="2" />
              <circle cx="18" cy="29" r="9" fill="#4d8f28" /><circle cx="18" cy="29" r="3.5" fill="#1f3d10" />
              <path d="M4 22 2 14M10 18 9 10M16 16V8M22 17 24 9M28 20 32 12M33 25 38 18" stroke="#333" strokeWidth="2" />
            </V>
            <V className="mt-[48px]">
              <path d="M0 4H40V34H32L26 14H0M0 38H10L14 28H26L32 42H40V56H0" fill="#eee" stroke="#555" strokeWidth="2.5" />
            </V>
            <V className="mt-[45px]">
              <path d="M0 8H28V50H0M28 24H43V58H0" fill="none" stroke="#555" strokeWidth="2.5" /><path d="M0 24H28V50H0Z" fill="url(#gO)" />
            </V>
            <V className="mt-[45px]">
              <path d="M0 8H42V16H0ZM0 44H42V52H0Z" fill="#eee" stroke="#555" strokeWidth="2.5" />
              <path d="M12 20V30H7L14 40 21 30H16V20ZM30 20V30H25L32 40 39 30H34V20Z" fill="#f6b068" stroke="#ea7f17" strokeWidth="2" />
              <path d="M0 30H3" stroke="#ea7f17" strokeWidth="3" />
            </V>
            <V className="mt-[45px]">
              <path d="M0 14 8 4 36 20V40L30 48 0 34Z" fill="#e4e4e4" stroke="#666" strokeWidth="2" /><path d="M0 8 8 4 36 20 30 26 0 10Z" fill="#ee7a28" />
              <circle cx="28" cy="44" r="12" fill="#fff" stroke="#222" strokeWidth="2.5" /><path d="M23 44 27 48 33 39" fill="none" stroke="#222" strokeWidth="2.5" />
            </V>
            <V className="mt-[43px]">
              <path d="M4 12H14L18 2V14" fill="none" stroke="#ea7f17" strokeWidth="3" />
              <path d="M0 32 14 20 30 30 8 54 0 48Z" fill="#e4e4e4" stroke="#333" strokeWidth="2.5" />
              <circle cx="29" cy="34" r="13" fill="#fff" stroke="#222" strokeWidth="2.5" /><path d="M20 44 10 52" stroke="#333" strokeWidth="5" />
            </V>
            <V className="mt-[78px]">
              <circle cx="6" cy="31" r="23" fill="#7a7a7a" stroke="#444" strokeWidth="2" /><rect x="4" y="28" width="3" height="16" fill="#fff" /><rect x="4" y="21" width="3" height="3" fill="#fff" />
              <path d="M6 2C26 4 38 18 40 34M6 9C20 11 30 22 33 34" fill="none" stroke="#bdbdbd" strokeWidth="2.5" />
            </V>
            <V className="mt-[74px]">
              <path d="M0 2H43V56H0" fill="#e8e8e8" stroke="#444" strokeWidth="2.5" /><path d="M0 12H43" stroke="#444" strokeWidth="2" /><path d="M24 7H27M30 7H33M36 7H39" stroke="#444" strokeWidth="2" />
              <circle cx="12" cy="33" r="20" fill="#2f94b3" /><path d="M4 24 14 22 12 30 4 32ZM14 38 24 36 22 46Z" fill="#bfe0ea" />
            </V>
            <V className="mt-[73px]">
              <circle cx="12" cy="30" r="28" fill="none" stroke="#555" strokeWidth="2.5" />
              <path d="M14 6V34H0" fill="none" stroke="#444" strokeWidth="2.5" /><path d="M14 2V8M14 52V58M34 30H41" stroke="#444" strokeWidth="2" />
            </V>
            <svg viewBox="0 0 45 72" className="mt-[48px] h-[72px] w-[45px] shrink-0">
              <path d="M0 0H8V8H0Z" fill="#e9352b" /><path d="M0 8H10V14H0Z" fill="#f4a03c" /><path d="M0 14H12V22H0Z" fill="#f4e43c" /><path d="M0 22H12V36H0Z" fill="#4ed04a" />
              <circle cx="13" cy="18" r="6" fill="#fff" />
              <path d="M0 40C12 28 24 28 42 34" fill="none" stroke="#666" strokeWidth="2.5" />
              <path d="M4 60 8 54 12 60ZM0 65H17" fill="#bdbdbd" stroke="#bdbdbd" strokeWidth="1.5" />
            </svg>
          </Strip>
        </div>

        {/* navigator */}
        <div className="flex w-[601px] shrink-0 flex-col bg-white pl-[16px] pr-[23px]">
          <div className="flex h-[70px] shrink-0 items-center justify-between pl-[10px]">
            <span className="text-[30px] leading-none text-[#222]">部件导航器</span>
            <div className="mr-[17px] mt-[4px] h-[24px] w-[30px] border-2 border-t-[5px] border-[#111]" />
          </div>
          <div className="shrink-0 border-2 border-[#dedede] pl-[1px]">
            <div className="flex h-[49px] border-b-[3px] border-[#dcdcdc] bg-[#f2f2f2] text-[30px] leading-none text-[#222]">
              <div className="flex w-[499px] shrink-0 items-center pl-[16px] pt-[2px]">
                <span>名称</span>
                <svg viewBox="0 0 26 13" className="ml-[41px] h-[13px] w-[26px]"><path d="M13 0 26 13H0Z" fill="#222" /></svg>
              </div>
              <div className="flex flex-1 items-center border-l-2 border-[#dcdcdc] pl-[16px] pt-[2px]">当</div>
            </div>
            <div className="relative">
              <svg viewBox="65 489 559 500" className="absolute left-0 top-0 z-10 h-[500px] w-[559px]">
                <path d="M92 525V855M102 514H115M102 564H115M102 614H115M102 863H115M139 628V755M149 663H162M149 764H162M187 680V714H210M187 780V814H210M139 880V914H160" fill="none" stroke="#8a8a8a" strokeWidth="2" strokeDasharray="2 3" />
              </svg>
              <Row>
                <Box className="ml-[16px]" />
                <Sm className="ml-[15px]">
                  <path d="M3 1H37V39H3Z" fill="#fff" stroke="#333" strokeWidth="2.5" /><path d="M3 8H37" stroke="#333" strokeWidth="1.5" /><path d="M26 4.5H28M30 4.5H32M33 4.5H35" stroke="#333" />
                  <path d="M12 30C10 22 20 14 24 18S30 26 28 32H12Z" fill="#888" /><circle cx="18" cy="28" r="5" fill="#555" />
                </Sm>
                <span className="ml-[6px]">模型视图</span>
              </Row>
              <Row alt>
                <Box className="ml-[16px]" />
                <svg viewBox="0 0 36 36" className="ml-[16px] h-[36px] w-[36px] shrink-0"><path d="M3 18 13 30 32 4" fill="none" stroke="#33c43f" strokeWidth="5" /></svg>
                <Sm>
                  <path d="M4 22 26 6 36 2V26L28 36H8Z" fill="#fff" stroke="#ee8f2f" strokeWidth="2" /><path d="M8 20H26V30H8Z" fill="#8a8a8a" /><circle cx="24" cy="20" r="7" fill="#6d6d6d" />
                </Sm>
                <span className="ml-[9px]">摄像机</span>
              </Row>
              <Row>
                <Box minus className="ml-[16px]" />
                <Folder className="ml-[15px]" />
                <span className="ml-[6px]">分析</span>
              </Row>
              <Row alt>
                <Box minus className="ml-[64px]" />
                <Folder blue className="ml-[15px]" />
                <span className="ml-[5px]">偏差度量</span>
              </Row>
              <Row>
                <Eye off className="ml-[144px]" />
                <svg viewBox="0 0 40 40" className="ml-[1px] h-[40px] w-[40px] shrink-0">
                  <path d="M8 14 24 4 38 20 22 34Z" fill="url(#gO)" stroke="#666" strokeWidth="1.5" /><path d="M12 30 30 16 36 24 24 36Z" fill="#ddd" />
                  <path d="M8 4V16M14 4V16M4 12 8 18 12 12M22 4H28M25 1V8" fill="none" stroke="#111" strokeWidth="2.5" />
                  <path d="M18 32 24 38 37 18" fill="none" stroke="#2fc23b" strokeWidth="3.5" />
                </svg>
                <span className="ml-[8px] text-[#a8a8a8]">动态偏差分析</span>
              </Row>
              <Row alt>
                <Box minus className="ml-[64px]" />
                <Sm className="ml-[15px]">
                  <path d="M1 3H14L18 8H34V34H1Z" fill="#eee" stroke="#444" strokeWidth="2" />
                  <path d="M14 22 26 14 38 22V30L26 40 14 30Z" fill="url(#gO)" />
                </Sm>
                <span className="ml-[5px]">拔模分析</span>
              </Row>
              <Row>
                <Eye className="ml-[144px]" />
                <Sm className="ml-[1px]">
                  <path d="M2 14 16 2 30 12V26L16 36 2 26Z" fill="url(#gO)" stroke="#d56f0e" strokeWidth="1.5" /><path d="M8 8 18 2 30 12 18 18Z" fill="#eee" />
                  <path d="M12 28 32 6 37 11 18 32 10 36Z" fill="#fff" stroke="#111" strokeWidth="2" /><path d="M16 38H38M30 20 38 38" stroke="#111" strokeWidth="2.5" />
                </Sm>
                <span className="ml-[7px]">拔模分析</span>
              </Row>
              <Row alt>
                <Box minus className="ml-[16px]" />
                <svg viewBox="0 0 36 36" className="ml-[16px] h-[36px] w-[36px] shrink-0"><circle cx="18" cy="18" r="17" fill="url(#gS)" /></svg>
                <Sm className="ml-[1px]">
                  <path d="M4 4H36V36H4Z" fill="#fff" stroke="#777" strokeWidth="1.5" strokeDasharray="4 24" />
                  <path d="M4 4H36V36H4Z" fill="none" stroke="#bbb" strokeWidth="1" />
                  <path d="M9 9H24V24H9Z" fill="none" stroke="#444" strokeWidth="2" /><path d="M16 16H32V32H16Z" fill="url(#gO)" stroke="#c8650c" strokeWidth="1" />
                </Sm>
                <span className="ml-[8px]">模型历史记录</span>
              </Row>
              <Row
                last={
                  <svg viewBox="0 0 20 36" className="h-[36px] w-[20px]">
                    <path d="M4 2H16V10H4ZM4 26H16V34H4Z" fill="#fff" stroke="#444" strokeWidth="2" /><path d="M8 14H18V22H8Z" fill="#ef8a1c" /><path d="M3 6V30M3 18H8" fill="none" stroke="#444" strokeWidth="2" />
                  </svg>
                }
              >
                <Eye className="ml-[96px]" />
                <svg viewBox="0 0 38 36" className="ml-[2px] h-[36px] w-[38px] shrink-0"><path d="M20 1 37 34 2 35Z" fill="#f7e38e" stroke="#d5a41a" strokeWidth="1.5" /><path d="M20 1 37 34 28 35Z" fill="#25307a" /><path d="M2 35H37" stroke="#222" strokeWidth="2" /></svg>
                <span className="ml-[8px] font-bold tracking-[0.2px]">40压块.sldprt (0)</span>
              </Row>
              {Array.from({ length: 18 }, (_, i) => (
                <Row key={i} alt={i % 2 === 0} />
              ))}
            </div>
            <div className="mt-[3px] flex h-[45px] items-center bg-[#f0f0f0] pl-[45px]">
              <div className="h-[30px] w-[295px] bg-[#868686]" />
            </div>
          </div>
          <div className="mb-[2px] mt-[2px] h-[13px] shrink-0 border-2 border-t-[4px] border-[#b0b0b0] bg-[#dfdfdf]" />
          <Sec>搜索</Sec>
          <Sec>相关性</Sec>
          <Sec>细节</Sec>
        </div>

        {/* graphics window */}
        <div className="flex min-w-0 flex-1 flex-col border-l-[3px] border-[#c7c7c7] bg-white">
          <div className="flex h-[64px] shrink-0 border-b-[4px] border-[#02618a]">
            <div className="flex w-[401px] items-center bg-[#02618a] pl-[14px] text-[#dff0f6]">
              <svg viewBox="0 0 36 36" className="h-[36px] w-[36px] shrink-0">
                <path d="M2 24C8 20 14 4 22 2 20 10 26 14 34 22 32 30 24 34 14 34 8 34 4 30 2 24Z" fill="#c9c9c9" stroke="#888" strokeWidth="1.5" /><ellipse cx="19" cy="25" rx="8" ry="4" fill="#02618a" stroke="#777" />
              </svg>
              <span className="ml-[14px] text-[29px] leading-none tracking-[0.4px]">40压块_sldprt.prt</span>
              <svg viewBox="0 0 26 26" className="ml-[15px] h-[26px] w-[26px] shrink-0"><path d="M18 10V2H3V24H18V18" fill="none" stroke="#fff" strokeWidth="3" /><path d="M10 14 18 13V9L25 15 18 21V18H10Z" fill="#fff" /></svg>
              <svg viewBox="0 0 20 20" className="ml-[18px] h-[20px] w-[20px] shrink-0"><path d="M2 2 18 18M18 2 2 18" stroke="#fff" strokeWidth="4.5" /></svg>
            </div>
          </div>
          <div className="relative min-h-0 flex-1 bg-linear-to-b from-[#b0b1b3] to-[#e8e9eb] to-85%">
            <svg viewBox="652 432 1259 1616" className="h-full w-full">
              <path d="M822 432V575M822 737V2048" stroke="#2d2d2d" strokeWidth="2" fill="none" />
              <path d="M654 658H741M901 658H1911" stroke="#5f5b3a" strokeWidth="2" fill="none" />
              {/* part */}
              <g stroke="#7b7b8a" strokeWidth="5" strokeLinejoin="round">
                <path d="M1060 884 1531 1180 1453 2060H1440L976 1765Z" fill="#0000b4" />
                <path d="M1531 1180 1580 1187 1498 2060H1453Z" fill="#0808dc" />
                <path d="M1580 1187 1758 1135 1675 2018 1563 2048H1498Z" fill="#0000e2" />
                <path d="M1062 866 1245 815 1289 820 1761 1117 1756 1135 1580 1187 1531 1180 1060 884Z" fill="#00ff00" />
                <ellipse cx="1411" cy="1002" rx="54" ry="24" fill="url(#gH)" transform="rotate(3 1411 1002)" />
              </g>
              {/* triad */}
              <g stroke="#bdbdbd" strokeWidth="1.5" fill="none">
                <path d="M827 1870 891 1851 957 1884 885 1905ZM885 1905 879 1985 954 1964 957 1884M827 1870 823 1948 879 1985" />
              </g>
              <path d="M889 1877 892 1835 884 1835 897 1790 901 1776 905 1790 912 1835 904 1835 903 1877Z" fill="#a02222" />
              <path d="M957 1892 985 1882 990 1880 1010 1883 993 1895 985 1898 975 1898 957 1905Z" fill="#1a5be6" />
              <path d="M915 1930 960 1950 971 1953 989 1980 960 1972 955 1965 915 1938Z" fill="#2e9a34" />
              <g fontFamily="'Liberation Sans', sans-serif" fontSize="25">
                <text x="894" y="1763" fill="#c22a2a">X</text>
                <text x="1024" y="1887" fill="#1a5be6">Z</text>
                <text x="996" y="2001" fill="#2e9a34">Y</text>
              </g>
            </svg>
            <span className="absolute bottom-[3px] right-[2px] font-['Noto_Sans_CJK_SC',serif] text-[13px] leading-none tracking-[1.3px] text-[#3d3d3d]">UG爱好者论坛@坏人UG</span>
          </div>
        </div>
      </div>

      {/* marker annotation over the navigator */}
      <svg viewBox="0 0 700 900" className="pointer-events-none absolute left-0 top-0 z-30 h-[900px] w-[700px]">
        <path d={smooth(loop)} fill="none" stroke="#c8202c" strokeWidth="4" strokeLinecap="round" />
        <path d={smooth(loop2)} fill="none" stroke="#c8202c" strokeWidth="4" strokeLinecap="round" />
      </svg>
      {/* mouse pointer */}
      <svg viewBox="0 0 24 40" className="absolute left-[620px] top-[436px] z-30 h-[40px] w-[24px]">
        <path d="M1 1V31L8 24 13 38 19 35 13 22H23Z" fill="#fff" stroke="#333" strokeWidth="1.5" strokeLinejoin="round" />
      </svg>
    </div>
  );
}

function Sec({ children }: P) {
  return (
    <div className="flex h-[60px] shrink-0 items-center border-b-[5px] border-[#d2d2d2] pl-[26px] text-[35px] leading-none text-[#0b5f85]">
      <svg viewBox="0 0 10 24" className="h-[24px] w-[10px]"><path d="M0 0 10 12 0 24Z" fill="#05597e" /></svg>
      <span className="ml-[23px]">{children}</span>
    </div>
  );
}
